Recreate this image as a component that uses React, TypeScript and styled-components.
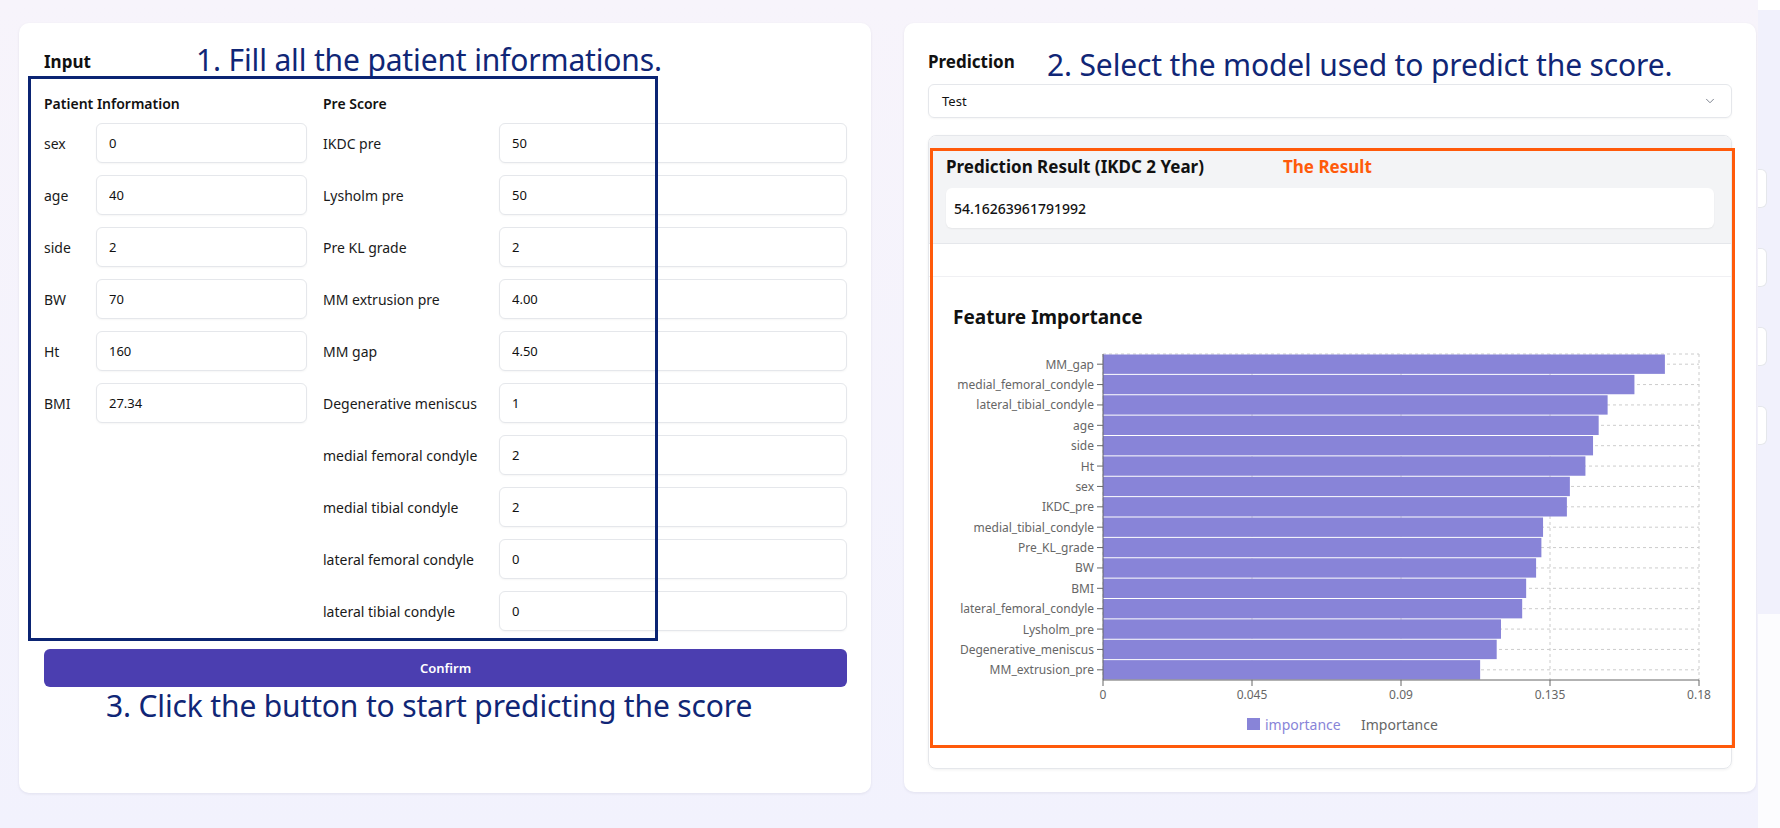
import React from 'react'
import styled, { createGlobalStyle } from 'styled-components'
import { ChevronDown } from 'lucide-react'

const GlobalStyle = createGlobalStyle`
  html, body {
    margin: 0;
    padding: 0;
  }
  * {
    box-sizing: border-box;
  }
  body {
    font-family: "Noto Sans", "Open Sans", sans-serif;
    color: #111827;
    background: linear-gradient(180deg, #f7f4fb 0%, #f2f2fd 100%);
  }
`

const PATIENT_FIELDS = [
  { label: 'sex', value: '0' },
  { label: 'age', value: '40' },
  { label: 'side', value: '2' },
  { label: 'BW', value: '70' },
  { label: 'Ht', value: '160' },
  { label: 'BMI', value: '27.34' },
]

const PRE_FIELDS = [
  { label: 'IKDC pre', value: '50' },
  { label: 'Lysholm pre', value: '50' },
  { label: 'Pre KL grade', value: '2' },
  { label: 'MM extrusion pre', value: '4.00' },
  { label: 'MM gap', value: '4.50' },
  { label: 'Degenerative meniscus', value: '1' },
  { label: 'medial femoral condyle', value: '2' },
  { label: 'medial tibial condyle', value: '2' },
  { label: 'lateral femoral condyle', value: '0' },
  { label: 'lateral tibial condyle', value: '0' },
]

const IMPORTANCE: [string, number][] = [
  ['MM_gap', 0.1697],
  ['medial_femoral_condyle', 0.1605],
  ['lateral_tibial_condyle', 0.1524],
  ['age', 0.1497],
  ['side', 0.148],
  ['Ht', 0.1457],
  ['sex', 0.141],
  ['IKDC_pre', 0.1401],
  ['medial_tibial_condyle', 0.1329],
  ['Pre_KL_grade', 0.1324],
  ['BW', 0.1308],
  ['BMI', 0.1278],
  ['lateral_femoral_condyle', 0.1266],
  ['Lysholm_pre', 0.1202],
  ['Degenerative_meniscus', 0.1189],
  ['MM_extrusion_pre', 0.1139],
]

const X_TICKS = [0, 0.045, 0.09, 0.135, 0.18]

const Page = styled.div`
  display: flex;
  width: 1780px;
  min-height: 828px;
  overflow: hidden;
`

const Main = styled.main`
  flex: 1;
  display: grid;
  grid-template-columns: 852px 852px;
  column-gap: 33px;
  align-items: start;
  padding: 23px 2px 0 19px;
`

const Card = styled.section<{ $h: number }>`
  position: relative;
  height: ${(p) => p.$h}px;
  background: #ffffff;
  border-radius: 10px;
  box-shadow: 0 1px 3px rgba(30, 30, 60, 0.08);
  padding: 28px 24px 0 25px;
`

const RightCard = styled(Card)`
  padding-left: 24px;
`

const CardTitle = styled.h2`
  margin: 0;
  font-size: 17px;
  line-height: 22px;
  font-weight: 700;
  color: #111111;
`

const FormGrid = styled.div`
  margin-top: 21px;
  display: grid;
  grid-template-columns: 1fr 2fr;
  column-gap: 16px;
`

const Column = styled.div`
  display: flex;
  flex-direction: column;
  gap: 12px;
`

const SectionTitle = styled.h3`
  margin: 0 0 -3px;
  font-size: 14px;
  line-height: 20px;
  font-weight: 600;
  color: #111111;
`

const FieldRow = styled.label`
  display: flex;
  align-items: center;
`

const FieldLabel = styled.span<{ $w: number }>`
  width: ${(p) => p.$w}px;
  flex-shrink: 0;
  font-size: 14px;
  color: #1a1a1a;
  white-space: nowrap;
`

const FieldInput = styled.input`
  flex: 1;
  min-width: 0;
  height: 40px;
  border: 1px solid #e5e7eb;
  border-radius: 6px;
  padding: 0 12px;
  font-family: inherit;
  font-size: 13px;
  color: #111111;
  background: #ffffff;
  box-shadow: 0 1px 2px rgba(0, 0, 0, 0.04);
  outline: none;
`

const ConfirmButton = styled.button`
  margin-top: 18px;
  width: 100%;
  height: 38px;
  border: none;
  border-radius: 6px;
  background: #4b3eb0;
  color: #ffffff;
  font-family: inherit;
  font-size: 13px;
  font-weight: 600;
  cursor: pointer;
`

const Annotation = styled.div<{ $x: number; $y: number }>`
  position: absolute;
  left: ${(p) => p.$x}px;
  top: ${(p) => p.$y}px;
  font-size: 30px;
  line-height: 40px;
  letter-spacing: -0.15px;
  color: #102676;
  white-space: nowrap;
  pointer-events: none;
`

const HighlightBox = styled.div<{ $x: number; $y: number; $w: number; $h: number; $color: string }>`
  position: absolute;
  left: ${(p) => p.$x}px;
  top: ${(p) => p.$y}px;
  width: ${(p) => p.$w}px;
  height: ${(p) => p.$h}px;
  border: 3px solid ${(p) => p.$color};
  pointer-events: none;
`

const ResultTag = styled.div`
  position: absolute;
  left: 379px;
  top: 133px;
  font-size: 17px;
  line-height: 22px;
  font-weight: 700;
  color: #ff5a0a;
`

const Select = styled.div`
  margin-top: 11px;
  height: 34px;
  display: flex;
  align-items: center;
  justify-content: space-between;
  padding: 0 14px 0 13px;
  border: 1px solid #e5e7eb;
  border-radius: 6px;
  font-size: 13px;
  color: #111111;
  box-shadow: 0 1px 2px rgba(0, 0, 0, 0.04);
`

const ResultPanel = styled.div`
  margin-top: 17px;
  border: 1px solid #e5e7eb;
  border-radius: 8px;
  overflow: hidden;
  box-shadow: 0 1px 3px rgba(0, 0, 0, 0.06);
`

const ResultHeader = styled.div`
  background: #f3f4f6;
  padding: 20px 17px 15px;
  border-bottom: 1px solid #e5e7eb;
`

const PanelTitle = styled.h3`
  margin: 0;
  font-size: 17px;
  line-height: 22px;
  font-weight: 700;
  color: #111111;
`

const ResultBox = styled.div`
  margin-top: 10px;
  height: 40px;
  display: flex;
  align-items: center;
  padding: 0 8px;
  background: #ffffff;
  border-radius: 6px;
  box-shadow: 0 1px 2px rgba(0, 0, 0, 0.06);
  font-size: 14px;
  font-weight: 500;
  color: #111111;
`

const ChartSection = styled.div`
  margin-top: 32px;
  border-top: 1px solid #f0f0f3;
  padding: 28px 24px 28px;
`

const ChartTitle = styled.h3`
  margin: 0;
  font-size: 19px;
  line-height: 24px;
  font-weight: 700;
  color: #111111;
`

const ChartSvg = styled.svg`
  display: block;
  margin-top: 11px;
  font-family: "Noto Sans", "Open Sans", sans-serif;
`

const AxisText = styled.text`
  font-size: 12px;
  fill: #666666;
`

const LegendText = styled.text<{ $color: string }>`
  font-size: 14px;
  fill: ${(p) => p.$color};
`

const Strip = styled.div`
  width: 22px;
  flex-shrink: 0;
  display: flex;
  flex-direction: column;
`

const StripTop = styled.div`
  height: 10px;
  background: #ffffff;
`

const StripMid = styled.div`
  height: 604px;
  display: flex;
  flex-direction: column;
  gap: 40px;
  padding-top: 159px;
  background: #f1f1fc;
`

const StubBox = styled.div`
  width: 9px;
  height: 39px;
  background: #ffffff;
  border: 1px solid #e5e7eb;
  border-left: none;
  border-radius: 0 6px 6px 0;
`

const StripBottom = styled.div`
  flex: 1;
  background: #fcfcfe;
`

function ImportanceChart() {
  const W = 760
  const H = 400
  const PL = 150
  const PR = 746
  const PT = 14
  const PB = 340
  const band = (PB - PT) / IMPORTANCE.length
  const xs = (v: number) => PL + (v / 0.18) * (PR - PL)

  return (
    <ChartSvg width={W} height={H} viewBox={`0 0 ${W} ${H}`}>
      <g stroke="#cccccc" strokeDasharray="3 3" fill="none">
        <line x1={PL} x2={PR} y1={PT} y2={PT} />
        {IMPORTANCE.map((_, i) => {
          const y = PT + band * (i + 0.5)
          return <line key={i} x1={PL} x2={PR} y1={y} y2={y} />
        })}
        {X_TICKS.map((t) => (
          <line key={t} x1={xs(t)} x2={xs(t)} y1={PT} y2={PB} />
        ))}
      </g>

      {IMPORTANCE.map(([name, v], i) => (
        <rect key={name} x={PL} y={PT + band * i + 0.5} width={xs(v) - PL} height={band - 1} fill="#8884d8" />
      ))}

      <g stroke="#666666">
        <line x1={PL} x2={PL} y1={PT} y2={PB} />
        <line x1={PL} x2={PR} y1={PB} y2={PB} />
        {IMPORTANCE.map((_, i) => {
          const y = PT + band * (i + 0.5)
          return <line key={i} x1={PL - 6} x2={PL} y1={y} y2={y} />
        })}
        {X_TICKS.map((t) => (
          <line key={t} x1={xs(t)} x2={xs(t)} y1={PB} y2={PB + 6} />
        ))}
      </g>

      {IMPORTANCE.map(([name], i) => (
        <AxisText key={name} x={PL - 9} y={PT + band * (i + 0.5)} textAnchor="end" dominantBaseline="central">
          {name}
        </AxisText>
      ))}
      {X_TICKS.map((t) => (
        <AxisText key={t} x={xs(t)} y={PB + 14} textAnchor="middle" dominantBaseline="central">
          {t}
        </AxisText>
      ))}

      <rect x={294} y={378} width={13} height={12} fill="#8884d8" />
      <LegendText $color="#8884d8" x={312} y={384} dominantBaseline="central">
        importance
      </LegendText>
      <LegendText $color="#666666" x={408} y={384} dominantBaseline="central">
        Importance
      </LegendText>
    </ChartSvg>
  )
}

export default function App() {
  return (
    <Page>
      <GlobalStyle />
      <Main>
        <Card $h={770}>
          <CardTitle>Input</CardTitle>
          <FormGrid>
            <Column>
              <SectionTitle>Patient Information</SectionTitle>
              {PATIENT_FIELDS.map((f) => (
                <FieldRow key={f.label}>
                  <FieldLabel $w={52}>{f.label}</FieldLabel>
                  <FieldInput defaultValue={f.value} />
                </FieldRow>
              ))}
            </Column>
            <Column>
              <SectionTitle>Pre Score</SectionTitle>
              {PRE_FIELDS.map((f) => (
                <FieldRow key={f.label}>
                  <FieldLabel $w={176}>{f.label}</FieldLabel>
                  <FieldInput defaultValue={f.value} />
                </FieldRow>
              ))}
            </Column>
          </FormGrid>
          <ConfirmButton>Confirm</ConfirmButton>

          <Annotation $x={177} $y={17}>1. Fill all the patient informations.</Annotation>
          <HighlightBox $x={9} $y={53} $w={630} $h={565} $color="#0b2473" />
          <Annotation $x={87} $y={663}>3. Click the button to start predicting the score</Annotation>
        </Card>

        <RightCard $h={769}>
          <CardTitle>Prediction</CardTitle>
          <Select>
            <span>Test</span>
            <ChevronDown size={14} strokeWidth={1.5} color="#6b7280" />
          </Select>
          <ResultPanel>
            <ResultHeader>
              <PanelTitle>Prediction Result (IKDC 2 Year)</PanelTitle>
              <ResultBox>54.16263961791992</ResultBox>
            </ResultHeader>
            <ChartSection>
              <ChartTitle>Feature Importance</ChartTitle>
              <ImportanceChart />
            </ChartSection>
          </ResultPanel>

          <Annotation $x={143} $y={22}>2. Select the model used to predict the score.</Annotation>
          <HighlightBox $x={26} $y={125} $w={805} $h={600} $color="#ff5a0a" />
          <ResultTag>The Result</ResultTag>
        </RightCard>
      </Main>

      <Strip>
        <StripTop />
        <StripMid>
          <StubBox />
          <StubBox />
          <StubBox />
          <StubBox />
        </StripMid>
        <StripBottom />
      </Strip>
    </Page>
  )
}
